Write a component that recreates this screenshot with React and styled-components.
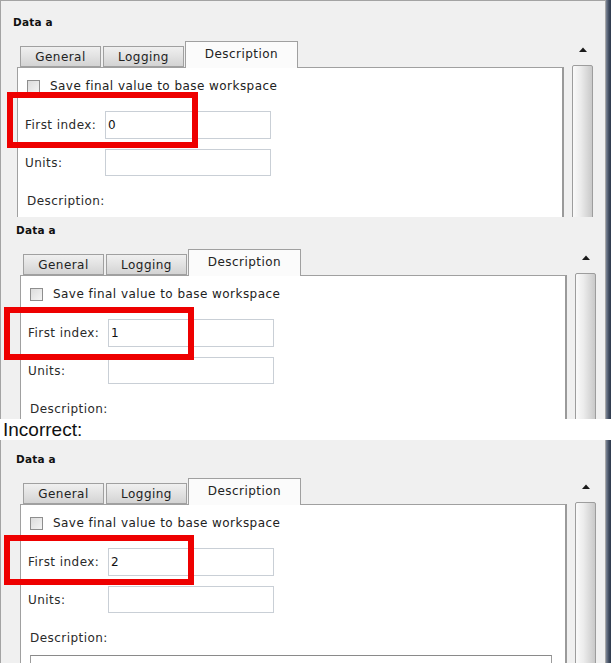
import React from "react"
import styled, { createGlobalStyle } from "styled-components"

const GlobalStyle = createGlobalStyle`
  html, body {
    margin: 0;
    padding: 0;
    background: #ffffff;
  }
  body {
    font-family: "DejaVu Sans", "Noto Sans", sans-serif;
    font-size: 12px;
    letter-spacing: 0.45px;
    color: #1e1e1e;
  }
`

const Page = styled.div`
  width: 611px;
  display: flex;
  flex-direction: column;
`

const Shot = styled.div`
  position: relative;
  display: flex;
  height: ${(p) => p.$height}px;
  overflow: hidden;
`

const Frame = styled.div`
  flex: 0 0 606px;
  box-sizing: border-box;
  background: #f0f0f0;
  border-left: 1px solid #a3a3a3;
  border-right: 1px solid #a8a8a8;
  border-top: ${(p) => (p.$topBorder ? "1px solid #a3a3a3" : "0")};
  padding-top: ${(p) => 14 - p.$crop + (p.$topBorder ? 0 : 1)}px;
  padding-left: ${(p) => p.$dx}px;
  overflow: hidden;
`

const Edge = styled.div`
  flex: 1;
  background: linear-gradient(90deg, #7d8696 0%, #3e4a5e 60%, #2f3a4c 100%);
`

const Title = styled.div`
  font-weight: bold;
  font-size: 10.5px;
  letter-spacing: 0.2px;
  line-height: 14px;
  height: 14px;
  padding-left: 12px;
  color: #111;
`

const Main = styled.div`
  display: flex;
  align-items: flex-start;
  margin-top: 12px;
`

const TabsArea = styled.div`
  width: 547px;
  margin-left: 16px;
  display: flex;
  flex-direction: column;
`

const TabStrip = styled.div`
  display: flex;
  align-items: flex-end;
  padding-left: 3px;
  height: 26px;
  position: relative;
  z-index: 1;
`

const Tab = styled.div`
  box-sizing: border-box;
  width: ${(p) => p.$width}px;
  margin-right: ${(p) => p.$gap}px;
  height: ${(p) => (p.$active ? 27 : 21)}px;
  margin-bottom: ${(p) => (p.$active ? -1 : 0)}px;
  border: 1px solid #a0a0a0;
  border-bottom: ${(p) => (p.$active ? "0" : "1px solid #a0a0a0")};
  background: ${(p) =>
    p.$active ? "#fbfbfb" : "linear-gradient(180deg, #f0f0f0 0%, #e2e2e2 50%, #d3d3d3 100%)"};
  display: flex;
  align-items: center;
  justify-content: center;
  padding-bottom: ${(p) => (p.$active ? 3 : 0)}px;
  color: #222;
`

const TabBody = styled.div`
  box-sizing: border-box;
  background: #ffffff;
  border: 1px solid #a0a0a0;
  border-right: 2px solid #9a9a9a;
  height: 400px;
  padding: 11px 0 0 7px;
`

const CheckRow = styled.div`
  display: flex;
  align-items: center;
  height: 14px;
  padding-left: 2px;
  gap: 10px;
  color: #222;
`

const Check = styled.span`
  box-sizing: border-box;
  width: 13px;
  height: 13px;
  border: 1px solid #8e8e8e;
  background: linear-gradient(135deg, #dcdcdc, #f4f4f4);
`

const FieldRow = styled.div`
  display: flex;
  align-items: center;
  margin-top: ${(p) => p.$top}px;
`

const Label = styled.span`
  width: 80px;
  color: #2a2a2a;
`

const Input = styled.div`
  box-sizing: border-box;
  width: 166px;
  height: ${(p) => p.$h}px;
  border: 1px solid #c9cfd6;
  background: #fff;
  display: flex;
  align-items: center;
  padding-left: 2px;
  color: #111;
`

const DescLabel = styled.div`
  margin-top: 18px;
  padding-left: 2px;
  line-height: 14px;
  color: #2a2a2a;
`

const DescArea = styled.div`
  box-sizing: border-box;
  margin: 10px 0 0 2px;
  width: 522px;
  height: 60px;
  border: 1px solid #9c9c9c;
  border-top-color: #8a8a8a;
`

const ScrollCol = styled.div`
  width: 21px;
  margin-left: 8px;
  display: flex;
  flex-direction: column;
  align-items: center;
`

const Arrow = styled.div`
  height: 24px;
  width: 100%;
  display: flex;
  justify-content: center;
  padding-top: 6px;
  box-sizing: border-box;
`

const Thumb = styled.div`
  box-sizing: border-box;
  width: 21px;
  height: 400px;
  border: 1px solid #9d9d9d;
  border-radius: 2px 2px 0 0;
  background: linear-gradient(90deg, #fafafa 0%, #ececec 40%, #c9c9c9 100%);
`

const Mark = styled.div`
  position: absolute;
  left: ${(p) => p.$left}px;
  top: ${(p) => p.$top}px;
  width: ${(p) => p.$w}px;
  height: ${(p) => p.$h}px;
  box-sizing: border-box;
  border: 6px solid #ee0000;
  pointer-events: none;
`

const Caption = styled.div`
  height: 21px;
  line-height: 21px;
  padding-left: 3px;
  font-family: "Liberation Sans", Arial, sans-serif;
  font-size: 19px;
  letter-spacing: 0;
  color: #111;
  background: #fff;
`

const panels = [
  { value: "0", height: 217, crop: 0, dx: 0, topBorder: true, mark: { left: 7, top: 92, w: 191, h: 56 } },
  { value: "1", height: 202, crop: 9, dx: 3, topBorder: false, mark: { left: 4, top: 90, w: 190, h: 53 } },
  { value: "2", height: 223, crop: 3, dx: 3, topBorder: false, mark: { left: 4, top: 95, w: 190, h: 50 }, textarea: true },
]

const tabs = [
  { name: "General", width: 81, gap: 2 },
  { name: "Logging", width: 81, gap: 1 },
  { name: "Description", width: 113, gap: 0, active: true },
]

const DataPanel = ({ value, height, crop, dx, topBorder, mark, textarea }) => (
  <Shot $height={height}>
    <Frame $crop={crop} $dx={dx} $topBorder={topBorder}>
      <Title>Data a</Title>
      <Main>
        <TabsArea>
          <TabStrip>
            {tabs.map((t) => (
              <Tab key={t.name} $width={t.width} $gap={t.gap} $active={t.active}>
                {t.name}
              </Tab>
            ))}
          </TabStrip>
          <TabBody>
            <CheckRow>
              <Check />
              <span>Save final value to base workspace</span>
            </CheckRow>
            <FieldRow $top={18}>
              <Label>First index:</Label>
              <Input $h={28}>{value}</Input>
            </FieldRow>
            <FieldRow $top={10}>
              <Label>Units:</Label>
              <Input $h={27} />
            </FieldRow>
            <DescLabel>Description:</DescLabel>
            {textarea && <DescArea />}
          </TabBody>
        </TabsArea>
        <ScrollCol>
          <Arrow>
            <svg width="8" height="5" viewBox="0 0 8 5">
              <path d="M0 5 L4 0.5 L8 5 Z" fill="#1a1a1a" />
            </svg>
          </Arrow>
          <Thumb />
        </ScrollCol>
      </Main>
    </Frame>
    <Edge />
    <Mark $left={mark.left} $top={mark.top} $w={mark.w} $h={mark.h} />
  </Shot>
)

const App = () => {
  return (
    <Page>
      <GlobalStyle />
      <DataPanel {...panels[0]} />
      <DataPanel {...panels[1]} />
      <Caption>Incorrect:</Caption>
      <DataPanel {...panels[2]} />
    </Page>
  )
}

export default App
